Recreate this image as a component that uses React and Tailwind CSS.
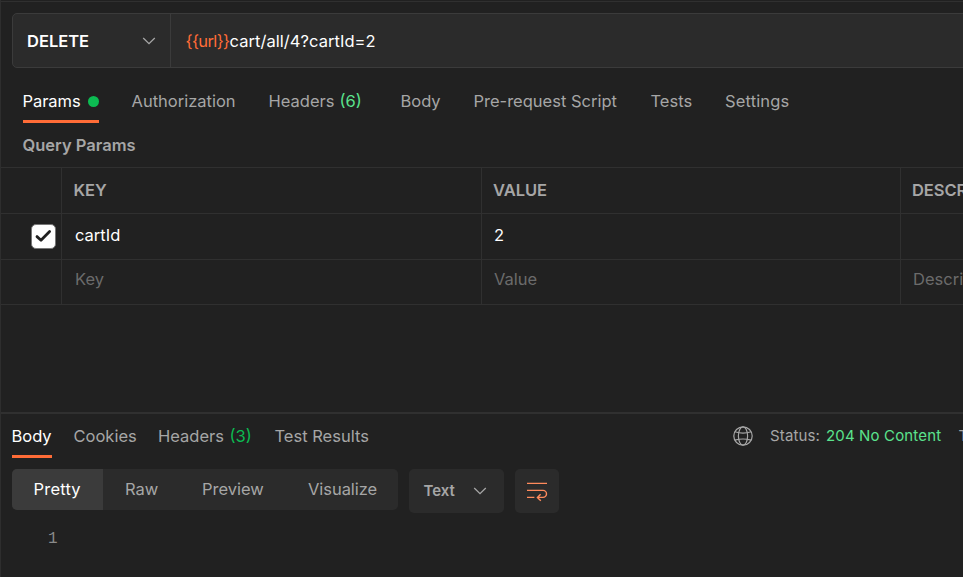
const requestTabs = [
  { label: "Authorization", box: "w-[137px]" },
  { label: "Headers", count: "(6)", box: "w-[132px]" },
  { label: "Body", box: "w-[73px]" },
  { label: "Pre-request Script", box: "w-[177px]" },
  { label: "Tests", box: "w-[74.5px]" },
  { label: "Settings", box: "w-[80px] tracking-[0.15px]" },
];

function Chevron({ className }) {
  return (
    <svg className={className} width="14" height="8" viewBox="0 0 14 8" fill="none" stroke="#a6a6a6" strokeWidth="1.3">
      <path d="M1.2 1 7 6.6 12.8 1" />
    </svg>
  );
}

function Row({ height, first, cells, pad, text }) {
  return (
    <div className={`flex border-b border-[#303030] ${height}`}>
      <div className="flex w-[61px] shrink-0 border-r border-[#303030]">{first}</div>
      {cells.map((cell, i) => (
        <div
          key={i}
          className={`shrink-0 whitespace-nowrap border-r border-[#303030] ${i === 0 ? "w-[420px]" : "w-[419px]"} ${i === 0 ? pad[0] : pad[1]} ${text}`}
        >
          {cell}
        </div>
      ))}
    </div>
  );
}

export default function App() {
  return (
    <div className="flex h-[577px] w-[963px] flex-col overflow-hidden border-l border-[#2e2e2e] bg-[#212121] font-['Inter',sans-serif] text-[16.5px] leading-6 text-[#a6a6a6]">
      <div className="mt-px h-px shrink-0 bg-[#303030]" />

      <div className="ml-[11px] mt-[11px] flex h-[55px] w-[1000px] shrink-0 rounded-[5px] border border-[#3b3b3b] bg-[#2b2b2b]">
        <div className="flex w-[158px] items-center justify-between border-r border-[#3b3b3b] pl-[14px] pr-[14px]">
          <span className="font-semibold text-white">DELETE</span>
          <Chevron />
        </div>
        <div className="flex items-center whitespace-nowrap pl-[14.5px] text-white">
          <span className="w-[44px] tracking-[-0.62px] text-[#ff6c37]">{"{{url}}"}</span>
          <span className="tracking-[0.05px]">cart/all/4?cartId=2</span>
        </div>
      </div>

      <div className="ml-[22px] flex h-[55px] shrink-0 whitespace-nowrap pt-[21px]">
        <div className="mr-[32.5px] flex h-[34px] w-[76px] justify-between border-b-[3px] border-[#ff6c37] text-white">
          <span className="-ml-[0.5px] tracking-[-0.05px]">Params</span>
          <span className="mt-[7px] size-[11px] rounded-full bg-[#0cbb52]" />
        </div>
        {requestTabs.map((tab) => (
          <div key={tab.label} className={tab.box}>
            {tab.label}
            {tab.count && <span className="ml-[5px] text-[#5be38d]">{tab.count}</span>}
          </div>
        ))}
      </div>

      <div className="ml-[21.5px] mt-[10px] h-[34px] shrink-0 font-semibold">Query Params</div>

      <div className="w-[1400px] shrink-0 border-t border-[#303030]">
        <Row
          height="h-[46px]"
          cells={["KEY", "VALUE", "DESCRIPTION"]}
          pad={["pl-[11.5px]", "pl-[11px]"]}
          text="pt-[10px] font-semibold tracking-[-0.05px]"
        />
        <Row
          height="h-[46px]"
          cells={["cartId", "2", ""]}
          pad={["pl-[13px]", "pl-[12px]"]}
          text="pt-[9px] text-white"
          first={
            <div className="ml-[30px] mt-[10px] flex size-[25px] items-center justify-center rounded-[5px] border border-[#777] bg-white">
              <svg className="mb-px" width="17" height="14" viewBox="0 0 17 14" fill="none" stroke="#212121" strokeWidth="2.8" strokeLinecap="round" strokeLinejoin="round">
                <path d="M2 7.6 6 11.2 14.6 2.6" />
              </svg>
            </div>
          }
        />
        <Row
          height="h-[45px]"
          cells={["Key", "Value", "Description"]}
          pad={["pl-[13px]", "pl-[12px]"]}
          text="pt-[7px] text-[#6b6b6b]"
        />
      </div>

      <div className="mt-[107px] h-[2px] shrink-0 bg-[#303030]" />

      <div className="flex h-[55px] shrink-0 whitespace-nowrap pl-[11px] pt-[10px]">
        <div className="mr-[21.5px] h-[34px] w-[40px] shrink-0 border-b-[3px] border-[#ff6c37] text-white">
          <span className="-ml-[0.5px]">Body</span>
        </div>
        <div className="w-[84.5px] shrink-0">Cookies</div>
        <div className="w-[116.5px] shrink-0">
          Headers<span className="ml-[5.5px] text-[#0cbb52]">(3)</span>
        </div>
        <div className="w-[458.5px] shrink-0">Test Results</div>
        <svg className="mr-[17px] mt-[2px] shrink-0" width="20" height="20" viewBox="0 0 20 20" fill="none" stroke="#a6a6a6" strokeWidth="1.2">
          <circle cx="10" cy="10" r="9.2" />
          <ellipse cx="10" cy="10" rx="4.6" ry="9.2" />
          <path d="M1.9 5.8Q10 8.4 18.1 5.8M1.9 14.2Q10 11.8 18.1 14.2" />
        </svg>
        <div className="w-[56px] shrink-0 text-[15px] tracking-[0.15px]">Status:</div>
        <div className="w-[132.5px] shrink-0 text-[15px] tracking-[0.15px] text-[#5be38d]">204 No Content</div>
        <div className="shrink-0 text-[15px]">Time:</div>
      </div>

      <div className="ml-[11px] flex h-[44px] shrink-0 items-start">
        <div className="mr-[11px] flex h-[41px] w-[386px] overflow-hidden rounded-[5px] bg-[#2b2b2b] leading-[40px]">
          <div className="w-[91px] bg-[#3b3b3b] pl-[21.5px] tracking-[0.2px] text-white">Pretty</div>
          <div className="w-[77px] pl-[22px]">Raw</div>
          <div className="w-[106px] pl-[22px]">Preview</div>
          <div className="pl-[22px] tracking-[-0.05px]">Visualize</div>
        </div>
        <div className="mr-[11px] flex h-[44px] w-[95px] items-center justify-between rounded-[5px] bg-[#2b2b2b] pl-[14.5px] pr-[17px] text-[15px] font-semibold">
          <span>Text</span>
          <Chevron />
        </div>
        <div className="flex size-[44px] items-center justify-center rounded-[5px] bg-[#2b2b2b]">
          <svg width="22" height="22" viewBox="0 0 22 22" fill="none" stroke="#ff8a5c" strokeWidth="1.4">
            <path d="M1 3.4H21M1 10.4H17a3.5 3.5 0 0 1 0 7H11.6M1 17.4H8.4M14.6 14.2 11.4 17.4 14.8 20.8" />
          </svg>
        </div>
      </div>

      <div className="ml-[47px] mt-[14px] shrink-0 font-['Liberation_Mono',monospace] text-[16px] text-[#8a8a8a]">1</div>
    </div>
  );
}
